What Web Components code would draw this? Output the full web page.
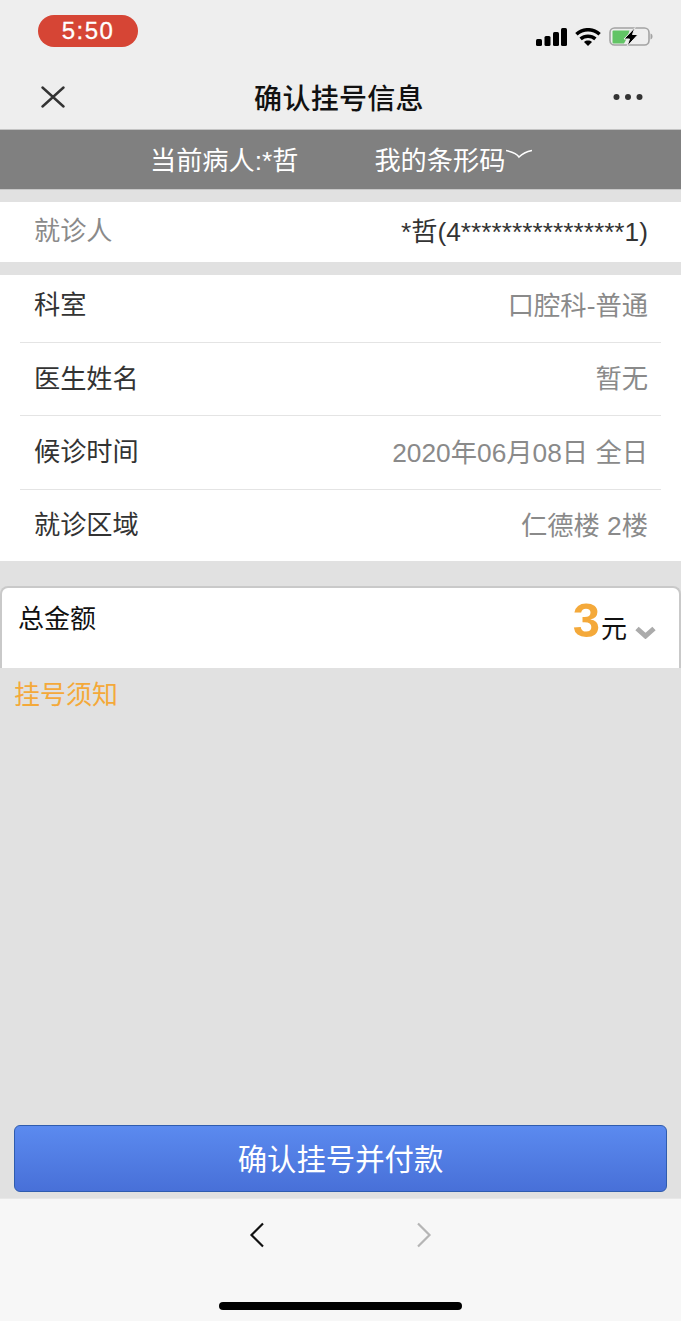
<!DOCTYPE html>
<html lang="zh-CN">

<head>
  <meta charset="UTF-8">
  <title>确认挂号信息</title>
  <style>
    html, body { margin: 0; padding: 0; }
    body {
      width: 681px;
      height: 1321px;
      overflow: hidden;
      background: #e1e1e1;
      font-family: "Liberation Sans", "Noto Sans CJK SC", sans-serif;
    }
    app-page { height: 1321px; }
  </style>
</head>

<body>
  <app-page>
    <top-header slot="top" title-text="确认挂号信息"></top-header>
    <patient-bar slot="top"></patient-bar>

    <info-group style="margin-top:12px">
      <info-row label="就诊人" muted single>*哲(4****************1)</info-row>
    </info-group>
    <info-group style="margin-top:13px">
      <info-row label="科室" first>口腔科-普通</info-row>
      <info-row label="医生姓名">暂无</info-row>
      <info-row label="候诊时间">2020年06月08日 全日</info-row>
      <info-row label="就诊区域" last>仁德楼 2楼</info-row>
    </info-group>
    <total-card amount="3"></total-card>
    <notice-link>挂号须知</notice-link>

    <pay-button slot="bottom">确认挂号并付款</pay-button>
    <browser-toolbar slot="bottom"></browser-toolbar>
  </app-page>

  <script type="module">
    const define = (tag, html, attrs = () => {}) => {
      customElements.define(tag, class extends HTMLElement {
        constructor() {
          super();
          this.attachShadow({ mode: 'open' }).innerHTML = html;
        }

        connectedCallback() {
          attrs(this, this.shadowRoot);
        }
      });
    };

    define('app-page', `
      <style>
        :host { display: flex; flex-direction: column; }
        main { flex: 1; min-height: 0; }
      </style>
      <slot name="top"></slot>
      <main><slot></slot></main>
      <slot name="bottom"></slot>
    `);

    define('top-header', `
      <style>
        :host { display: block; height: 129px; background: #eeeeee; border-bottom: 1px solid #c4c4c4; color: #111; }
        .status { display: flex; justify-content: space-between; align-items: flex-start; height: 32px; padding: 15px 28px 0 38px; }
        .time { width: 100px; height: 32px; border-radius: 16px; background: #d64535; color: #fff; font: 24px/32px "Liberation Sans", sans-serif; letter-spacing: 1.5px; text-align: center; -webkit-text-stroke: .3px #fff; }
        .signals { display: flex; align-items: center; gap: 8px; margin-top: 12px; }
        svg { display: block; }
        .nav { display: flex; justify-content: space-between; align-items: center; height: 50px; margin-top: 25px; padding: 0 38px 0 41px; }
        h1 { margin: 0; font-size: 28px; line-height: 50px; font-weight: 500; font-family: "Noto Sans CJK SC", sans-serif; letter-spacing: .3px; }
      </style>
      <div class="status">
        <div class="time">5:50</div>
        <div class="signals">
          <svg width="31" height="18" viewBox="0 0 31 18" fill="#000">
            <rect x="0" y="11" width="6" height="7" rx="1.5"/>
            <rect x="8.5" y="8" width="6" height="10" rx="1.5"/>
            <rect x="17" y="4" width="6" height="14" rx="1.5"/>
            <rect x="25" y="0" width="6" height="18" rx="1.5"/>
          </svg>
          <svg width="26" height="18" viewBox="0 0 26 18" fill="none" stroke="#000" stroke-width="3.500">
            <path d="M1.4 6.2C8 .2 18 .2 24.6 6.2"/>
            <path d="M5.6 10.9c4.3-3.7 10.500-3.700 14.800 0"/>
            <path d="M13 18l-4-4.100c2.300-1.800 5.700-1.800 8 0z" fill="#000" stroke="none"/>
          </svg>
          <svg width="44" height="20" viewBox="0 0 44 20">
            <rect x="1" y="1" width="39" height="17" rx="4.500" fill="none" stroke="#a3a3a3" stroke-width="1.600"/>
            <path d="M41.500 6.500c1.500.4 2 1.600 2 3s-.5 2.600-2 3z" fill="#a3a3a3"/>
            <path d="M4.500 3.500h16l-2 6.500-3.500 6.500h-10.500a1 1 0 0 1-1-1v-11a1 1 0 0 1 1-1z" fill="#62c465"/>
            <path d="M26 .5l-11 11.500h5.500l-2.500 7.500 11-12h-5.500z" fill="#000" stroke="#eee" stroke-width="1"/>
          </svg>
        </div>
      </div>
      <div class="nav">
        <svg width="24" height="22" viewBox="0 0 24 22" fill="none" stroke="#333" stroke-width="2.400" stroke-linecap="round"><path d="M1.500 1.500l21 19M22.500 1.500l-21 19"/></svg>
        <h1 id="title"></h1>
        <svg width="30" height="8" viewBox="0 0 30 8" fill="#333"><circle cx="3.500" cy="4" r="3"/><circle cx="15" cy="4" r="3"/><circle cx="26.500" cy="4" r="3"/></svg>
      </div>
    `, (el, root) => {
      root.querySelector('#title').textContent = el.getAttribute('title-text');
    });

    define('patient-bar', `
      <style>
        :host { display: flex; height: 59px; background: #808080; border-bottom: 1px solid #c8c8c8; color: #fff; font-size: 26.200px; line-height: 63px; padding-left: 150px; }
        span { display: block; }
        .code { margin-left: 76px; position: relative; }
        svg { position: absolute; left: 132px; top: 19px; }
      </style>
      <span>当前病人:*哲</span>
      <span class="code">我的条形码<svg width="26" height="10" viewBox="0 0 26 10" fill="none" stroke="#fff" stroke-width="1.500"><path d="M0 1.500c8 2 12 5 13 6.500C15 6 19 3 26 1.500"/></svg></span>
    `);

    define('info-group', `
      <style>:host { display: block; background: #fff; }</style>
      <slot></slot>
    `);

    define('info-row', `
      <style>
        :host { display: block; padding: 0 20px; }
        .line { display: flex; justify-content: space-between; align-items: center; box-sizing: border-box; height: 73.500px; padding: 0 13px 4px 14px; border-bottom: 1px solid #e4e4e4; font-size: 26.200px; color: #8a8a8a; }
        .value { font-size: 26.300px; }
        :host([first]) .line { height: 67.500px; padding-bottom: 10px; }
        :host([last]) .line { border-bottom: 0; height: 71px; }
        :host([single]) .line { height: 60px; border-bottom: 0; padding-bottom: 6px; color: #333; }
        .label { color: #333; }
        :host([muted]) .label { color: #8a8a8a; }
      </style>
      <div class="line"><span class="label" id="label"></span><span class="value"><slot></slot></span></div>
    `, (el, root) => {
      root.querySelector('#label').textContent = el.getAttribute('label');
    });

    define('total-card', `
      <style>
        :host { display: flex; justify-content: space-between; align-items: flex-start; height: 82px; margin-top: 25px; padding: 0 23px 0 16px; background: #fff; border: 2px solid #c9c9c9; border-bottom: 0; border-radius: 8px 8px 0 0; box-sizing: border-box; color: #111; font-size: 26px; }
        .label { margin-top: 15px; line-height: 32px; }
        .amount { display: flex; align-items: flex-end; height: 66px; }
        b { color: #f4a93a; font-size: 49px; line-height: 60px; margin-bottom: 4px; font-family: "Liberation Sans", sans-serif; }
        .unit { line-height: 36px; margin-left: 1px; margin-bottom: 7px; }
        svg { margin: 0 0 15px 8px; }
      </style>
      <span class="label">总金额</span>
      <div class="amount"><b id="num"></b><span class="unit">元</span><svg width="21" height="13" viewBox="0 0 21 13" fill="none" stroke="#ababab" stroke-width="5"><path d="M2 2.500l8.500 7.500 8.500-7.500"/></svg></div>
    `, (el, root) => {
      root.querySelector('#num').textContent = el.getAttribute('amount');
    });

    define('notice-link', `
      <style>:host { display: block; padding: 9px 0 0 14px; color: #f4a93a; font-size: 26px; line-height: 36px; }</style>
      <slot></slot>
    `);

    define('pay-button', `
      <style>
        :host { display: block; padding: 0 14px 6px; }
        button { display: block; width: 100%; height: 67px; padding: 0; border: 1px solid #2f5cae; border-radius: 6px; background: linear-gradient(#5b8aef, #4870d8); color: #fff; font: 29.400px/67px "Liberation Sans", "Noto Sans CJK SC", sans-serif; }
      </style>
      <button><slot></slot></button>
    `);

    define('browser-toolbar', `
      <style>
        :host { display: block; height: 122px; background: #f7f7f7; border-top: 1px solid #e8e8e8; }
        .arrows { display: flex; justify-content: center; gap: 140px; padding: 23px 0 0 0; }
        svg { display: block; }
        .home { width: 243px; height: 8px; margin: 54px auto 0; border-radius: 4px; background: #000; }
      </style>
      <div class="arrows">
        <svg width="26" height="26" viewBox="0 0 26 26" fill="none" stroke="#111" stroke-width="2.200"><path d="M18 1.500L6.500 13 18 24.500"/></svg>
        <svg width="26" height="26" viewBox="0 0 26 26" fill="none" stroke="#b5b5b5" stroke-width="2.200"><path d="M7 1.500L18.500 13 7 24.500"/></svg>
      </div>
      <div class="home"></div>
    `);
  </script>
</body>

</html>
